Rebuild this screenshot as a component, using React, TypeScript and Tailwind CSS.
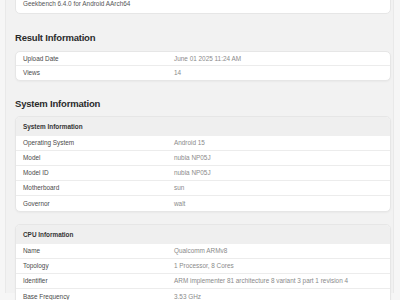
import React from "react";

type Row = { label: string; value: string };

const resultRows: Row[] = [
  { label: "Upload Date", value: "June 01 2025 11:24 AM" },
  { label: "Views", value: "14" },
];

const systemRows: Row[] = [
  { label: "Operating System", value: "Android 15" },
  { label: "Model", value: "nubia NP05J" },
  { label: "Model ID", value: "nubia NP05J" },
  { label: "Motherboard", value: "sun" },
  { label: "Governor", value: "walt" },
];

const cpuRows: Row[] = [
  { label: "Name", value: "Qualcomm ARMv8" },
  { label: "Topology", value: "1 Processor, 8 Cores" },
  { label: "Identifier", value: "ARM implementer 81 architecture 8 variant 3 part 1 revision 4" },
  { label: "Base Frequency", value: "3.53 GHz" },
];

function InfoRow({ row, last, tight }: { row: Row; last: boolean; tight?: boolean }) {
  return (
    <div
      className={
        "flex items-center px-[7px] text-[6.4px] leading-[8px] " +
        (tight ? "h-[14px] " : "h-[15px] ") +
        (last ? "" : "border-b border-[#ececec]")
      }
    >
      <span className="w-[151px] shrink-0 text-[#4a4a4a]">{row.label}</span>
      <span className="text-[#8a8a8a] whitespace-nowrap">{row.value}</span>
    </div>
  );
}

function Card({ title, rows, tight }: { title?: string; rows: Row[]; tight?: boolean }) {
  return (
    <div className="bg-white border border-[#e6e6e6] rounded-[5px] shadow-[0_1px_2px_rgba(0,0,0,0.04)] overflow-hidden">
      {title && (
        <div className="flex items-center h-[19px] px-[7px] bg-[#efefef] text-[6.4px] font-bold text-[#333]">
          {title}
        </div>
      )}
      {rows.map((row, i) => (
        <InfoRow key={row.label} row={row} last={i === rows.length - 1} tight={tight} />
      ))}
    </div>
  );
}

function Heading({ children, className }: { children: React.ReactNode; className: string }) {
  return (
    <h2
      className={
        "text-[9.5px] leading-[14px] font-bold text-[#2a2a2a] tracking-[-0.2px] " + className
      }
    >
      {children}
    </h2>
  );
}

export default function App() {
  return (
    <div
      className="w-[400px] h-[300px] overflow-hidden bg-[#f6f6f6] pl-[5px] pr-[6px]"
      style={{ fontFamily: "'Liberation Sans', Arial, sans-serif" }}
    >
      <div className="h-full bg-[#f2f2f2] border-x border-[#e9e9e9] pl-[9px] pr-[2px]">
        <div className="-mt-[7px] bg-white border border-[#e6e6e6] rounded-[5px] px-[7px] pt-[6px] pb-[5px]">
          <div className="text-[6.4px] leading-[8px] text-[#555]">
            Geekbench 6.4.0 for Android AArch64
          </div>
        </div>

        <Heading className="mt-[17px] mb-[6px]">Result Information</Heading>
        <Card rows={resultRows} tight />

        <Heading className="mt-[16px] mb-[5px]">System Information</Heading>
        <Card title="System Information" rows={systemRows} />

        <div className="h-[12px]" />
        <Card title="CPU Information" rows={cpuRows} />
      </div>
    </div>
  );
}
